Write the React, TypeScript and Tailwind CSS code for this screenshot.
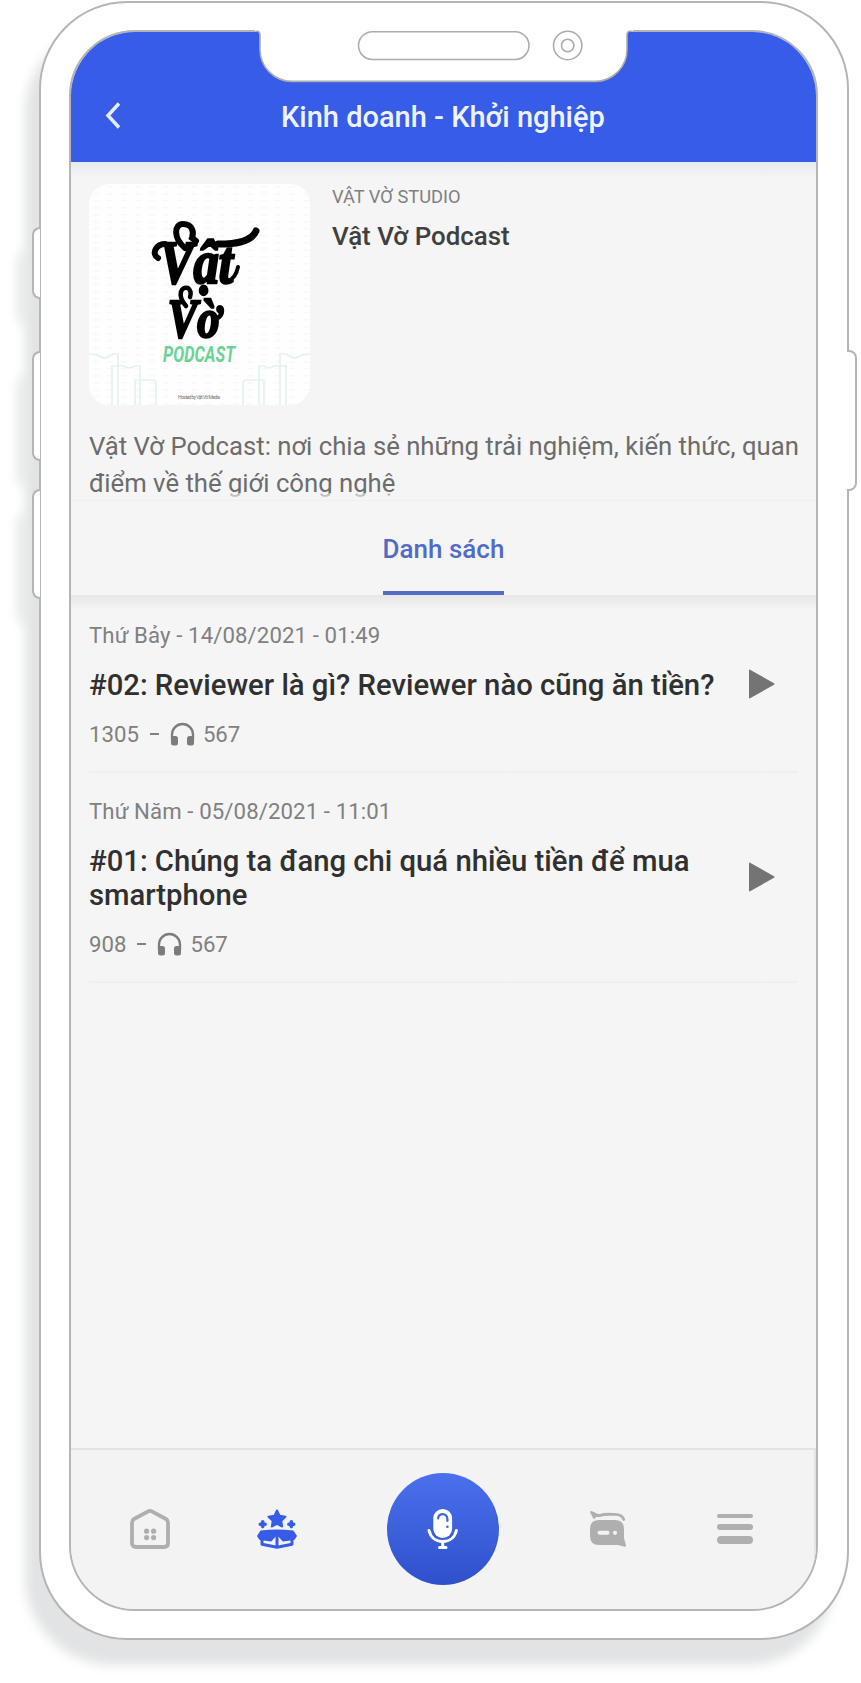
import React from 'react';

type Episode = {
  date: string;
  title: string;
  duration: string;
  listens: string;
};

const episodes: Episode[] = [
  {
    date: 'Thứ Bảy - 14/08/2021 - 01:49',
    title: '#02: Reviewer là gì? Reviewer nào cũng ăn tiền?',
    duration: '1305',
    listens: '567',
  },
  {
    date: 'Thứ Năm - 05/08/2021 - 11:01',
    title: '#01: Chúng ta đang chi quá nhiều tiền để mua smartphone',
    duration: '908',
    listens: '567',
  },
];

const Notch: React.FC = () => (
  <svg
    className="absolute left-[214px] top-[26px] h-[56px] w-[378px]"
    viewBox="0 0 378 56"
    fill="none"
    stroke="#adadad"
    strokeWidth="1.6"
  >
    <path d="M0 0H378V2H375Q372 2 372 6V20A32 32 0 0 1 340 52.4H37A32 32 0 0 1 5 20V6Q5 2 2 2H0Z" fill="#fff" stroke="none" />
    <path d="M1 2.2H2Q5 2.2 5 6V20A32 32 0 0 0 37 52.4H340A32 32 0 0 0 372 20V6Q372 2.2 375 2.2H377" />
    <rect x="103.5" y="2.7" width="170.5" height="27.8" rx="13.9" />
    <circle cx="312.7" cy="16.5" r="14.2" />
    <circle cx="312.7" cy="16.5" r="6.2" />
  </svg>
);

const CoverArt: React.FC = () => (
  <svg className="h-[221px] w-[221px] shrink-0 rounded-[20px] bg-[#fdfefd]" viewBox="0 0 221 221">
    <defs>
      <pattern id="dots" width="14" height="7" patternUnits="userSpaceOnUse">
        <rect x="4" y="2" width="6" height="1.5" fill="#f7f9f8" />
      </pattern>
    </defs>
    <rect width="221" height="221" fill="url(#dots)" />

    {/* Skyline */}
    <g fill="none" stroke="#e3f3ea" strokeWidth="1.6">
      <path d="M0 170Q8 170 12 173T24 170H29V221M23 221V182H35Q40 186 46 182H51V221M46 221V196H64Q67 196 67 200V221" />
      <path d="M221 170Q213 170 209 173T197 170H191V221M197 221V182H185Q180 186 175 182H170V221M175 221V196H157Q154 196 154 200V221" />
    </g>

    {/* Wordmark */}
    <text
      transform="scale(0.82 1)"
      fontFamily="'Liberation Serif', serif"
      fontWeight="700"
      fontStyle="italic"
      fill="#000"
      stroke="#000"
      strokeWidth="2.6"
    >
      <tspan x="86" y="99" fontSize="62">Vật</tspan>
      <tspan x="96" y="153" fontSize="54">Vờ</tspan>
    </text>
    <g fill="none" stroke="#000" strokeWidth="6" strokeLinecap="round">
      <path d="M69 74C62 70 67 60 76 60" />
      <path d="M96 64C84 54 85 40 94 40C104 40 105 49 103 54L107 57" />
      <path d="M129 60C143 60 162 59 167 47" strokeWidth="7" />
      <path d="M138 98Q147 94 149 83" strokeWidth="4" />
      <path d="M97 122C87 110 93 102 99 104Q103 107 101 113" strokeWidth="4.5" />
    </g>
    <text
      x="74"
      y="178"
      fontFamily="Roboto, sans-serif"
      fontWeight="700"
      fontStyle="italic"
      fontSize="22"
      fill="#6ad296"
      textLength="72"
      lengthAdjust="spacingAndGlyphs"
    >
      PODCAST
    </text>
    <text x="89" y="215" fontFamily="Roboto, sans-serif" fontSize="5" fill="#777" textLength="42">
      Hosted by Vật Vờ Media
    </text>
  </svg>
);

const HeadphoneIcon: React.FC = () => (
  <svg className="h-[24px] w-[25px]" viewBox="0 0 25 24" fill="none">
    <path d="M2 18V12.5A10.5 10.5 0 0 1 23 12.5V18" stroke="#7c7c7c" strokeWidth="2.3" />
    <rect x="1" y="14" width="7" height="9.5" rx="2.5" fill="#7c7c7c" />
    <rect x="17" y="14" width="7" height="9.5" rx="2.5" fill="#7c7c7c" />
  </svg>
);

const EpisodeRow: React.FC<{ episode: Episode }> = ({ episode }) => (
  <div className="flex items-center border-b-2 border-[#efefef] pb-6 pr-[23px] pt-[25px]">
    <div className="w-[640px]">
      <p className="text-[22.2px] leading-[26px] tracking-[0.1px] text-[#808080]">{episode.date}</p>
      <h3 className="mt-5 text-[29.25px] font-medium leading-[34px] text-[#303030]">{episode.title}</h3>
      <div className="mt-[19px] flex h-[26px] items-center text-[22.2px] leading-[26px] text-[#808080]">
        <span>{episode.duration}</span>
        <span className="ml-[11px] h-[2px] w-[9px] bg-[#808080]" />
        <span className="ml-[11px] mr-2">
          <HeadphoneIcon />
        </span>
        <span>{episode.listens}</span>
      </div>
    </div>
    <svg className="mb-px ml-auto h-[30px] w-[27px]" viewBox="0 0 27 30">
      <path d="M1 1.5Q1 0 2.5 1L26 14.2Q27 15 26 15.8L2.5 29Q1 30 1 28.5Z" fill="#747474" />
    </svg>
  </div>
);

const BottomNav: React.FC = () => (
  <nav className="flex h-[161px] shrink-0 items-center border-r-2 border-t-2 border-[#e3e3e3] bg-[#f3f3f3] pb-px pl-[59px]">
    {/* Home */}
    <svg className="h-10 w-10" viewBox="0 0 40 40" fill="#afafaf">
      <path
        d="M18.2 2.4Q20 1.4 21.8 2.4L36 10Q38 11.2 38 13.5V34Q38 38 34 38H6Q2 38 2 34V13.5Q2 11.2 4 10Z"
        fill="none"
        stroke="#afafaf"
        strokeWidth="3.8"
      />
      <circle cx="16.6" cy="22.2" r="2.6" />
      <circle cx="23.6" cy="22.2" r="2.6" />
      <circle cx="16.6" cy="28.6" r="2.6" />
      <circle cx="23.6" cy="28.6" r="2.6" />
    </svg>

    {/* Discover */}
    <svg className="ml-[87px] h-10 w-10" viewBox="0 0 40 40" fill="#365ce8" stroke="#365ce8" strokeLinejoin="round">
      <path d="M20 1.5L22.6 6.8L28.5 7.7L24.3 11.8L25.2 17.5L20 14.9L14.8 17.5L15.7 11.8L11.5 7.7L17.4 6.8Z" strokeWidth="2" />
      <path d="M5.7 12.8V17.6M3.3 15.2H8.1M34.3 12.8V17.6M31.9 15.2H36.7" strokeWidth="3.6" strokeLinecap="round" />
      <path d="M4 22.5Q20 20.5 36 22.5L39 27L37 30L26 31.5L21.5 26.5H18.5L14 31.5L3 30L1 27Z" strokeWidth="1.8" />
      <path d="M5 30V35.2L20 38.2L35 35.2V30" fill="none" strokeWidth="3" />
      <path d="M20 27V37" strokeWidth="3" />
    </svg>

    {/* Voice */}
    <button className="ml-[90px] h-28 w-28 rounded-full bg-linear-to-b from-[#4b70ed] to-[#2f50cb]">
      <svg className="h-28 w-28" viewBox="0 0 112 112" fill="none" strokeLinecap="round">
        <rect x="46.3" y="36" width="18.8" height="29" rx="9.2" fill="#fff" />
        <path d="M42 57.5C43.5 64 48.5 68.5 55.7 68.5S68 64 69.4 57.5" stroke="#fff" strokeWidth="3" />
        <path d="M55.7 69V74M52.5 74.6H59" stroke="#fff" strokeWidth="3" />
        <path d="M51.2 45.5C51 39.5 60.4 39.5 60.4 46V48" stroke="#3e62e0" strokeWidth="2.2" />
        <circle cx="60.4" cy="53.8" r="1.3" fill="#3e62e0" />
      </svg>
    </button>

    {/* Chat */}
    <svg className="ml-[91px] h-9 w-9" viewBox="0 0 36 36" fill="#afafaf">
      <path d="M9 9H25Q34 9 34 18V27L36 34.5Q36 36 34.5 35.7L28 34H9Q0 34 0 25V18Q0 9 9 9Z" />
      <path d="M0 1Q.5-.3 2 .2L8 3L5 7.5Q4 8.5 3 7Z" />
      <path d="M7 4.5H10C15 2.5 21 3.4 25 3.4Q32 3.4 33.8 8.5" fill="none" stroke="#afafaf" strokeWidth="2.8" strokeLinecap="round" />
      <path d="M9.5 21.8H17.5" stroke="#f3f3f3" strokeWidth="4" strokeLinecap="round" />
      <circle cx="25" cy="21.8" r="2.1" fill="#f3f3f3" />
    </svg>

    {/* Menu */}
    <div className="ml-[91px] flex w-9 flex-col">
      <span className="h-[4px] rounded-full bg-[#afafaf]" />
      <span className="mt-[6px] h-[6px] rounded-full bg-[#afafaf]" />
      <span className="mt-[6px] h-[8px] rounded-full bg-[#afafaf]" />
    </div>
  </nav>
);

const App: React.FC = () => {
  return (
    <div className="flex h-[1683px] w-[861px] overflow-hidden bg-white pl-[32px] pt-px font-['Roboto',sans-serif]">
      {/* Left side buttons */}
      <div className="relative z-10 flex w-[8px] shrink-0 flex-col pt-[226px]">
        <span className="h-[72px] rounded-l-[8px] border-2 border-r-0 border-[#b5b5b5] bg-white shadow-[-14px_25px_12px_#e1e3e4]" />
        <span className="mt-[52px] h-[110px] rounded-l-[8px] border-2 border-r-0 border-[#b5b5b5] bg-white shadow-[-14px_25px_12px_#e1e3e4]" />
        <span className="mt-[28px] h-[110px] rounded-l-[8px] border-2 border-r-0 border-[#b5b5b5] bg-white shadow-[-14px_25px_12px_#e1e3e4]" />
      </div>

      {/* Phone body */}
      <div className="relative -ml-px h-[1639px] w-[810px] shrink-0 rounded-[88px] border-2 border-[#b5b5b5] bg-white pl-[28px] pt-[27px] shadow-[-14px_25px_12px_#e1e3e4]">
        <div className="flex h-[1581px] w-[749px] flex-col overflow-hidden rounded-[66px] border-2 border-[#b5b5b5] bg-[#f5f5f5]">
          <header className="flex h-[130px] shrink-0 bg-[#365ce8] pl-[34px] pt-[69px]">
            <svg className="h-8 w-4" viewBox="0 0 16 32" fill="none">
              <path d="M14 2.5L3 14.5L14 26.5" stroke="#e4ecff" strokeWidth="3.5" />
            </svg>
            <h1 className="ml-[160px] text-[29px] font-medium leading-8 text-[#eef3ff]">Kinh doanh - Khởi nghiệp</h1>
          </header>

          <section className="h-[339px] shrink-0 overflow-hidden border-b border-[#f0f0f0] bg-linear-to-b from-[#e6e9ef] to-[#f5f5f5] to-[16px] pl-[18px] pt-[22px]">
            <div className="flex">
              <CoverArt />
              <div className="ml-[22px] pt-[2px]">
                <p className="text-[18.3px] leading-[21px] text-[#808080]">VẬT VỜ STUDIO</p>
                <h2 className="mt-[14px] text-[25.9px] font-medium leading-[31px] text-[#404040]">Vật Vờ Podcast</h2>
              </div>
            </div>
            <p className="mt-[23px] whitespace-nowrap text-[25.7px] leading-[37px] text-[#6c6c6c]">
              Vật Vờ Podcast: nơi chia sẻ những trải nghiệm, kiến thức, quan
              <br />
              điểm về thế giới công nghệ
            </p>
            {/* Fades the last line out */}
            <div className="relative -mt-[9px] h-[10px] bg-linear-to-b from-[#f5f5f5]/50 to-[#f5f5f5]" />
          </section>

          <div className="flex h-[94px] shrink-0 justify-center">
            <button className="h-full border-b-4 border-[#536bc8] pb-[27px] pt-[33px] text-[26px] font-medium leading-[30px] text-[#536bc8]">
              Danh sách
            </button>
          </div>

          <main className="flex-1 bg-linear-to-b from-[#e7e7e7] to-[#f5f5f5] to-[15px] px-[18px] pt-[2px]">
            {episodes.map((episode) => (
              <EpisodeRow key={episode.title} episode={episode} />
            ))}
          </main>

          <BottomNav />
        </div>
        <Notch />
      </div>

      {/* Right side button */}
      <div className="relative z-10 -ml-[2px] w-[10px] shrink-0 pt-[349px]">
        <div className="h-[141px] rounded-r-[8px] border-2 border-l-0 border-[#b5b5b5] bg-white" />
      </div>
    </div>
  );
};

export default App;
